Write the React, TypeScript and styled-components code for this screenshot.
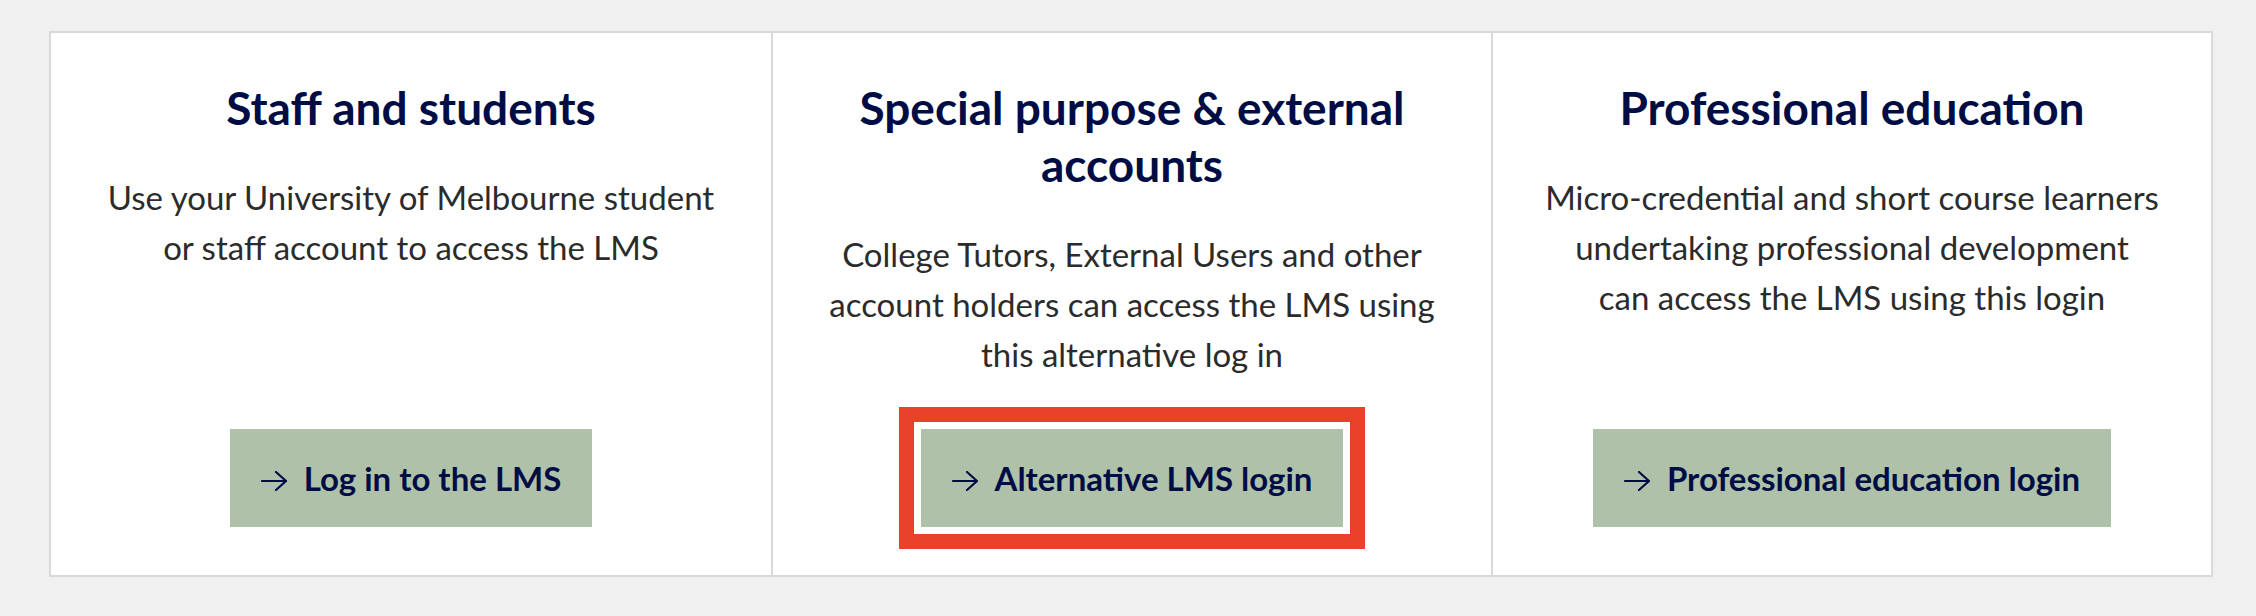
import React from 'react';
import styled, { createGlobalStyle } from 'styled-components';

interface Option {
  title: string;
  text: string;
  action: string;
  highlighted?: boolean;
}

// line breaks kept as in the original layout
const options: Option[] = [
  {
    title: 'Staff and students',
    text: 'Use your University of Melbourne student\nor staff account to access the LMS',
    action: 'Log in to the LMS',
  },
  {
    title: 'Special purpose & external accounts',
    text: 'College Tutors, External Users and other\naccount holders can access the LMS using\nthis alternative log in',
    action: 'Alternative LMS login',
    highlighted: true,
  },
  {
    title: 'Professional education',
    text: 'Micro-credential and short course learners\nundertaking professional development\ncan access the LMS using this login',
    action: 'Professional education login',
  },
];

const Arrow = () => (
  <ArrowIcon viewBox="0 0 26 20" fill="none" stroke="currentColor" strokeWidth="2.2" strokeLinecap="round" strokeLinejoin="round">
    <path d="M1 10h24" />
    <path d="M15 1l10 9-10 9" />
  </ArrowIcon>
);

const App = () => {
  return (
    <>
      <GlobalStyle />
      <Page>
        <Card>
          {options.map((o) => (
            <Column key={o.title}>
              <Title>{o.title}</Title>
              <Text>{o.text}</Text>
              <Button href="#" $highlighted={o.highlighted}>
                <Arrow />
                {o.action}
              </Button>
            </Column>
          ))}
        </Card>
      </Page>
    </>
  );
};

const GlobalStyle = createGlobalStyle`
  body {
    margin: 0;
    background: #f0f0f0;
    font-family: Lato, "Noto Sans", sans-serif;
  }
`;

const Page = styled.div`
  padding: 31px 0 0 49px;
  height: 616px;
  box-sizing: border-box;
`;

const Card = styled.div`
  display: grid;
  grid-template-columns: repeat(3, 1fr);
  width: 2164px;
  box-sizing: border-box;
  background: #fff;
  border: 2px solid #d9d9d9;
`;

const Column = styled.div`
  display: flex;
  flex-direction: column;
  align-items: center;
  text-align: center;
  padding: 46px 40px 48px;
  & + & {
    border-left: 2px solid #d9d9d9;
  }
`;

const Title = styled.h2`
  margin: 0;
  font-size: 46px;
  line-height: 57px;
  font-weight: 700;
  color: #000d45;
`;

const Text = styled.p`
  margin: 36px 0 50px;
  font-size: 33px;
  line-height: 50px;
  color: #2b2b2b;
  white-space: pre-line;
`;

const Button = styled.a<{ $highlighted?: boolean }>`
  display: flex;
  align-items: center;
  gap: 17px;
  height: 98px;
  margin-top: auto;
  padding: 0 31px;
  box-sizing: border-box;
  background: #afc2a9;
  color: #000d45;
  font-size: 33px;
  font-weight: 700;
  text-decoration: none;
  outline: ${(p) => (p.$highlighted ? '15px solid #e9412a' : 'none')};
  outline-offset: 7px;
`;

const ArrowIcon = styled.svg`
  width: 26px;
  height: 20px;
  margin-top: 6px;
  flex-shrink: 0;
`;

export default App;
